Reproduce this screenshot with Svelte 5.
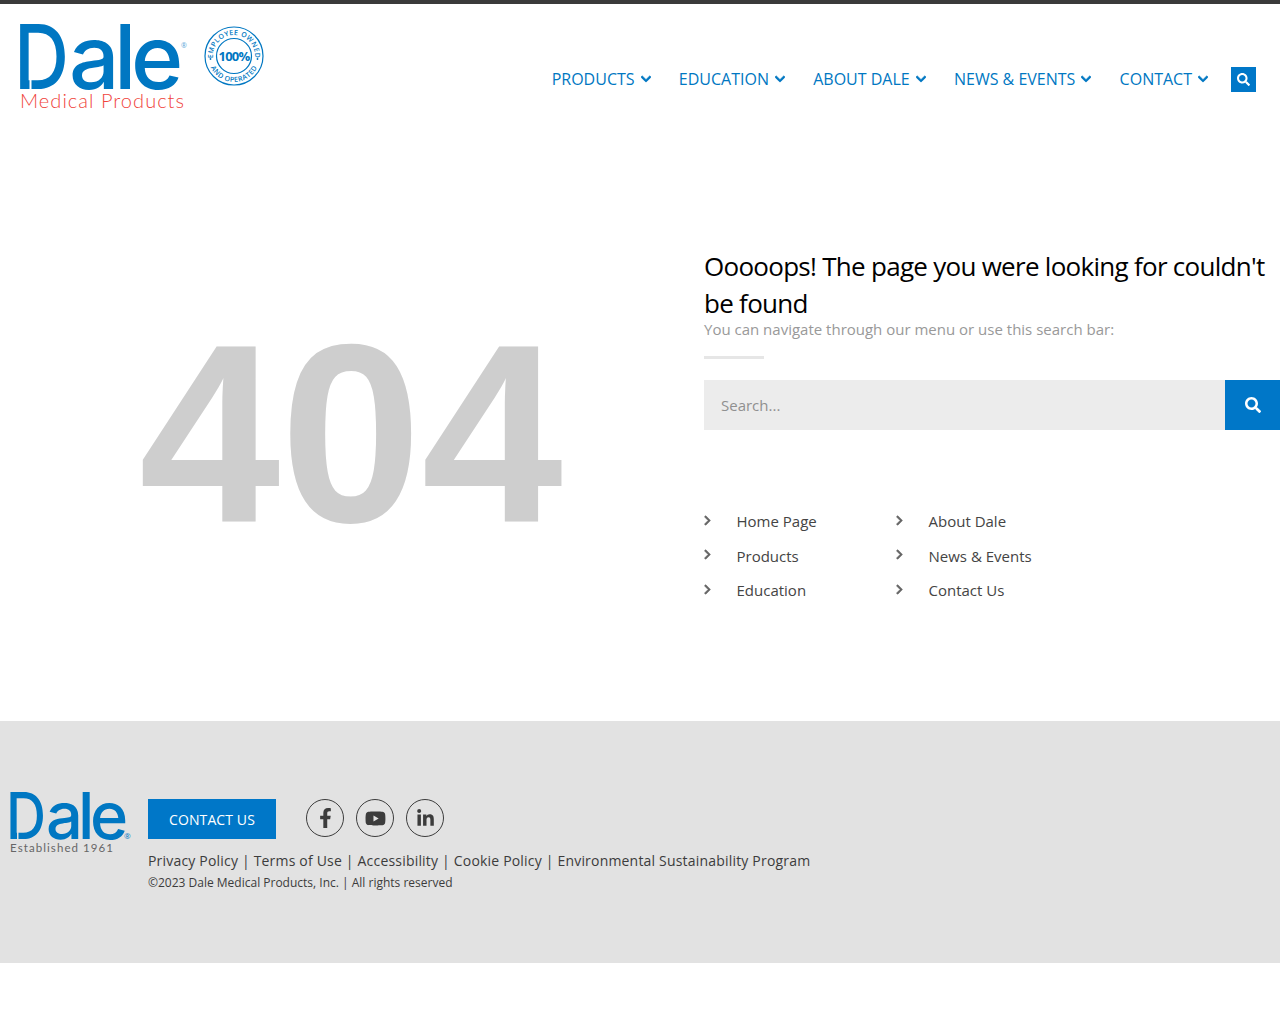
<script>
	const nav = ["PRODUCTS", "EDUCATION", "ABOUT DALE", "NEWS & EVENTS", "CONTACT"];
	const links = ["Home Page", "About Dale", "Products", "News & Events", "Education", "Contact Us"];
	const legal = ["Privacy Policy", "Terms of Use", "Accessibility", "Cookie Policy", "Environmental Sustainability Program"];
	const searchPath = "M505 442.7L405.3 343c-4.5-4.5-10.6-7-17-7H372c27.6-35.3 44-79.7 44-128C416 93.1 322.9 0 208 0S0 93.1 0 208s93.1 208 208 208c48.3 0 92.7-16.4 128-44v16.3c0 6.4 2.5 12.5 7 17l99.7 99.7c9.4 9.4 24.6 9.4 33.9 0l28.3-28.3c9.4-9.4 9.4-24.6.1-34zM208 336c-70.7 0-128-57.2-128-128 0-70.7 57.2-128 128-128 70.7 0 128 57.2 128 128 0 70.7-57.2 128-128 128z";
</script>

<div class="page">
	<header>
		<div class="brand">
			<svg class="logo" viewBox="0 0 170 90" width="170" height="90">
				<text x="-6" y="64.500" class="dale" textLength="55" lengthAdjust="spacingAndGlyphs">D</text>
				<text x="49 94 111" y="64.500" class="dale">ale</text>
				<rect x="9.500" y="52" width="2" height="14" fill="#fff" />
				<text x="161" y="24" class="reg">®</text>
				<text x="0" y="84" class="medical" textLength="164" lengthAdjust="spacing">Medical Products</text>
			</svg>
			<svg class="badge" viewBox="0 0 60 60" width="60" height="60">
				<defs>
					<path id="top-arc" d="M30 51a21 21 0 0 1 0-42a21 21 0 0 1 0 42" />
					<path id="bottom-arc" d="M30 4a26 26 0 0 0 0 52a26 26 0 0 0 0-52" />
				</defs>
				<circle cx="30" cy="30" r="29" fill="none" stroke="#0077c2" stroke-width="1.2" />
				<circle cx="30" cy="30" r="17.500" fill="none" stroke="#0077c2" stroke-width="1.2" />
				<circle cx="6.500" cy="33" r="0.9" fill="#0077c2" />
				<circle cx="53.500" cy="33" r="0.9" fill="#0077c2" />
				<text class="arc"><textPath href="#top-arc" startOffset="50%" text-anchor="middle">EMPLOYEE OWNED</textPath></text>
				<text class="arc"><textPath href="#bottom-arc" startOffset="50%" text-anchor="middle">AND OPERATED</textPath></text>
				<text x="30" y="34.500" class="pct" text-anchor="middle">100%</text>
			</svg>
		</div>
		<nav>
			{#each nav as item}
				<a href="#top">
					{item}
					<svg viewBox="0 0 448 512" width="10" height="12"><path d="M207.029 381.476L12.686 187.132c-9.373-9.373-9.373-24.569 0-33.941l22.667-22.667c9.357-9.357 24.522-9.375 33.901-.04L224 284.505l154.745-154.021c9.379-9.335 24.544-9.317 33.901.04l22.667 22.667c9.373 9.373 9.373 24.569 0 33.941L240.971 381.476c-9.373 9.372-24.569 9.372-33.942 0z" /></svg>
				</a>
			{/each}
			<button class="nav-search" aria-label="Search">
				<svg viewBox="0 0 512 512" width="13" height="13"><path d={searchPath} /></svg>
			</button>
		</nav>
	</header>

	<main>
		<div class="code">404</div>
		<div class="info">
			<h1>Ooooops! The page you were looking for couldn't be found</h1>
			<p>You can navigate through our menu or use this search bar:</p>
			<div class="divider"></div>
			<form class="search">
				<input type="text" placeholder="Search..." />
				<button type="button" aria-label="Search">
					<svg viewBox="0 0 512 512" width="16" height="16"><path d={searchPath} /></svg>
				</button>
			</form>
			<ul>
				{#each links as link}
					<li>
						<svg viewBox="0 0 320 512" width="7" height="11"><path d="M285.476 272.971L91.132 467.314c-9.373 9.373-24.569 9.373-33.941 0l-22.667-22.667c-9.357-9.357-9.375-24.522-.04-33.901L188.505 256 34.484 101.255c-9.335-9.379-9.317-24.544.04-33.901l22.667-22.667c9.373-9.373 24.569-9.373 33.941 0L285.475 239.03c9.373 9.372 9.373 24.568.001 33.941z" /></svg>
						<a href="#top">{link}</a>
					</li>
				{/each}
			</ul>
		</div>
	</main>

	<footer>
		<svg class="foot-logo" viewBox="0 0 122 64" width="122" height="64">
			<text x="-4" y="50" class="foot-dale" textLength="40" lengthAdjust="spacingAndGlyphs">D</text>
			<text x="36 68 80" y="50" class="foot-dale">ale</text>
			<rect x="7" y="41" width="1.500" height="10" fill="#e2e2e2" />
			<text x="114" y="50" class="foot-reg">®</text>
			<text x="0" y="63" class="est" textLength="103" lengthAdjust="spacing">Established 1961</text>
		</svg>
		<div class="foot-body">
			<div class="foot-top">
				<a class="cta" href="#top">CONTACT US</a>
				<div class="social">
					<a href="#top" aria-label="Facebook"><svg viewBox="0 0 320 512" width="13" height="20"><path d="M279.14 288l14.22-92.66h-88.91v-60.13c0-25.35 12.42-50.06 52.24-50.06h40.42V6.26S260.43 0 225.360 0c-73.22 0-121.08 44.38-121.08 124.72v70.62H22.89V288h81.39v224h100.17V288z" /></svg></a>
					<a href="#top" aria-label="YouTube"><svg viewBox="0 0 576 512" width="21" height="19"><path d="M549.655 124.083c-6.281-23.65-24.787-42.276-48.284-48.597C458.781 64 288 64 288 64S117.22 64 74.629 75.486c-23.497 6.322-42.003 24.947-48.284 48.597-11.412 42.867-11.412 132.305-11.412 132.305s0 89.438 11.412 132.305c6.281 23.65 24.787 41.5 48.284 47.821C117.22 448 288 448 288 448s170.78 0 213.371-11.486c23.497-6.321 42.003-24.171 48.284-47.821 11.412-42.867 11.412-132.305 11.412-132.305s0-89.438-11.412-132.305zm-317.51 213.508V175.185l142.739 81.205-142.739 81.201z" /></svg></a>
					<a href="#top" aria-label="LinkedIn"><svg viewBox="0 0 448 512" width="17" height="19"><path d="M100.28 448H7.4V148.9h92.88zM53.79 108.1C24.09 108.1 0 83.5 0 53.8a53.79 53.79 0 0 1 107.58 0c0 29.7-24.1 54.3-53.79 54.3zM447.9 448h-92.68V302.4c0-34.7-.7-79.2-48.29-79.2-48.29 0-55.69 37.7-55.69 76.7V448h-92.78V148.9h89.08v40.8h1.3c12.4-23.5 42.69-48.3 87.88-48.3 94 0 111.28 61.9 111.28 142.3V448z" /></svg></a>
				</div>
			</div>
			<div class="legal">
				{#each legal as item, i}{#if i > 0}{" | "}{/if}<a href="#top">{item}</a>{/each}
			</div>
			<div class="copy">©2023 Dale Medical Products, Inc. | All rights reserved</div>
		</div>
	</footer>
</div>

<style>
	:global(body) {
		font-family: "Open Sans", sans-serif;
		background: #fff;
	}
	.page {
		border-top: 4px solid #3a3a3a;
		min-height: 1020px;
	}
	a {
		text-decoration: none;
		color: inherit;
	}
	header {
		display: flex;
		justify-content: space-between;
		height: 126px;
		padding: 20px 24px 0 20px;
		box-sizing: border-box;
	}
	.brand {
		display: flex;
		align-items: flex-start;
	}
	.logo {
		display: block;
		overflow: visible;
	}
	.dale {
		font-family: Inter, sans-serif;
		font-size: 89px;
		font-weight: 500;
		fill: #0077c2;
	}
	.reg {
		font-family: "Open Sans", sans-serif;
		font-size: 7px;
		fill: #5aa5d8;
	}
	.medical {
		font-family: Lato, sans-serif;
		font-size: 20px;
		font-weight: 300;
		fill: #f0443c;
	}
	.badge {
		display: block;
		margin: 2px 0 0 14px;
	}
	.arc {
		font-family: "Open Sans", sans-serif;
		font-size: 7px;
		font-weight: 600;
		letter-spacing: 0.4px;
		fill: #0077c2;
	}
	.pct {
		font-family: "Open Sans", sans-serif;
		font-size: 13px;
		font-weight: 700;
		letter-spacing: -0.8px;
		fill: #0077c2;
	}
	nav {
		display: flex;
		align-items: center;
		height: 24px;
		margin-top: 43px;
		font-size: 16px;
		color: #0077c2;
	}
	nav a {
		display: flex;
		align-items: center;
		gap: 6px;
		margin-right: 28.250px;
	}
	nav a svg {
		fill: #0077c2;
		stroke: #0077c2;
		stroke-width: 36px;
	}
	nav a:last-of-type {
		margin-right: 23px;
	}
	.nav-search {
		width: 25px;
		height: 25px;
		padding: 0;
		border: 0;
		background: #0077c8;
		display: flex;
		align-items: center;
		justify-content: center;
	}
	.nav-search svg,
	.search svg {
		fill: #fff;
	}
	main {
		display: grid;
		grid-template-columns: 704px 1fr;
		height: 591px;
	}
	.code {
		font-family: "Liberation Sans", sans-serif;
		font-weight: 700;
		font-size: 254px;
		line-height: 300px;
		color: #cecece;
		text-align: center;
		padding: 154px 2px 0 0;
	}
	.info {
		padding-top: 118px;
	}
	h1 {
		margin: 0;
		font-size: 26px;
		line-height: 37px;
		font-weight: 400;
		letter-spacing: -0.72px;
		color: #000;
	}
	.info p {
		margin: 0;
		font-size: 15px;
		line-height: 12px;
		padding-top: 1px;
		color: #999;
	}
	.divider {
		width: 60px;
		height: 3px;
		background: #e6e6e6;
		margin-top: 21px;
	}
	.search {
		display: flex;
		height: 50px;
		margin-top: 21px;
	}
	.search input {
		flex: 1;
		min-width: 0;
		border: 0;
		padding: 0 17px;
		background: #ececec;
		font: 15px "Open Sans", sans-serif;
	}
	.search input::placeholder {
		color: #909090;
		opacity: 1;
	}
	.search button {
		width: 55px;
		border: 0;
		padding: 0;
		background: #0077c8;
		display: flex;
		align-items: center;
		justify-content: center;
	}
	ul {
		list-style: none;
		margin: 74px 0 0;
		padding: 0;
		display: grid;
		grid-template-columns: 192px 1fr;
		grid-auto-rows: 34.500px;
		font-size: 15px;
		color: #444;
	}
	li {
		display: flex;
		align-items: center;
		gap: 25.500px;
	}
	li svg {
		fill: #666;
		stroke: #666;
		stroke-width: 28px;
		margin-top: -2px;
	}
	footer {
		height: 242px;
		background: #e2e2e2;
		display: flex;
		box-sizing: border-box;
		padding: 68px 0 0 10px;
		color: #3c3c3c;
	}
	.foot-logo {
		display: block;
		overflow: visible;
	}
	.foot-dale {
		font-family: Inter, sans-serif;
		font-size: 65px;
		font-weight: 500;
		fill: #0077c2;
	}
	.foot-reg {
		font-family: "Open Sans", sans-serif;
		font-size: 8px;
		fill: #0077c2;
	}
	.est {
		font-family: Lato, sans-serif;
		font-size: 11.500px;
		fill: #666;
	}
	.foot-body {
		margin-left: 16px;
		padding-top: 10px;
	}
	.foot-top {
		display: flex;
		align-items: flex-start;
	}
	.cta {
		width: 128px;
		height: 40px;
		background: #0077c8;
		color: #fff;
		font-size: 14px;
		letter-spacing: 0.1px;
		display: flex;
		align-items: center;
		justify-content: center;
	}
	.social {
		display: flex;
		gap: 12px;
		margin-left: 30px;
	}
	.social a {
		width: 38px;
		height: 38px;
		box-sizing: border-box;
		border: 1px solid #3c3c3c;
		border-radius: 50%;
		display: flex;
		align-items: center;
		justify-content: center;
	}
	.social svg {
		fill: #3c3c3c;
	}
	.legal {
		margin-top: 12px;
		font-size: 14px;
		line-height: 20px;
		letter-spacing: 0.19px;
		white-space: pre-wrap;
	}
	.copy {
		margin-top: 2px;
		font-size: 12px;
		line-height: 20px;
	}
</style>
